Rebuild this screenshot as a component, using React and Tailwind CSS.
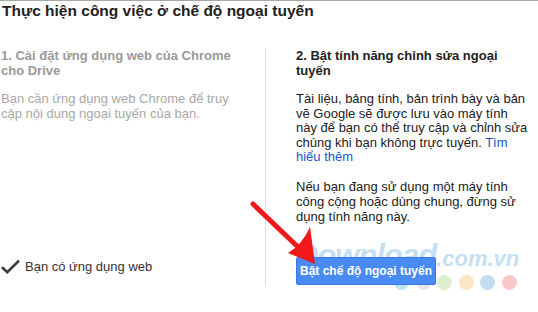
import React from "react";

const font = { fontFamily: '"Liberation Sans", Arial, sans-serif' };

function CheckIcon() {
  return (
    <svg width="19" height="15" viewBox="0 0 19 15" className="shrink-0">
      <path d="M1 8.2 L6.3 13.2 L18 1.6" fill="none" stroke="#3a3a3a" strokeWidth="2.6" />
    </svg>
  );
}

// red annotation arrow drawn over the page
function RedArrow() {
  return (
    <svg
      width="538"
      height="312"
      viewBox="0 0 538 312"
      className="absolute left-0 top-0 pointer-events-none z-30"
    >
      <path d="M253 203 L298 246" stroke="#f01818" strokeWidth="5" strokeLinecap="round" />
      <path d="M315 263 L310 226 Q302 244 288 252 Z" fill="#f01818" />
    </svg>
  );
}

function Watermark() {
  const dots = ["#8fd6f8", "#d8d8d8", "#c6e6ad", "#fcd79f", "#9cc6e6", "#f7a3a6"];
  return (
    <div className="absolute left-[296px] top-[238px] pointer-events-none z-[5]">
      <div className="flex items-baseline italic font-bold text-[#9fcbea] opacity-60">
        <span className="text-[31px] leading-[34px] tracking-[-1px]">Download</span>
        <span className="text-[22px] leading-[34px]">.com.vn</span>
      </div>
      <div className="flex gap-[6.5px] ml-[98px] -mt-[1px] opacity-60">
        {dots.map((c) => (
          <span key={c} className="block w-[15px] h-[15px] rounded-full" style={{ background: c }} />
        ))}
      </div>
    </div>
  );
}

export default function App() {
  return (
    <div className="relative w-[538px] h-[312px] bg-white overflow-hidden border-t border-[#a8a8a8]" style={font}>
      <h1 className="pl-[2px] text-[15.5px] leading-[20px] font-bold text-[#222]">
        Thực hiện công việc ở chế độ ngoại tuyến
      </h1>

      <div className="flex mt-[27px] h-[237px]">
        {/* left column */}
        <div className="w-[265px] pl-[1px] pr-[20px] flex flex-col">
          <p className="text-[13px] leading-[15px] font-bold text-[#9a9a9a]">
            1. Cài đặt ứng dụng web của Chrome cho Drive
          </p>
          <p className="mt-[14px] text-[13px] leading-[14.5px] text-[#a8a8a8]">
            Bạn cần ứng dụng web Chrome để truy cập nội dung ngoại tuyến của bạn.
          </p>
          <div className="mt-auto mb-[9px] flex items-center gap-[5px] text-[13px] text-[#333]">
            <CheckIcon />
            <span>Bạn có ứng dụng web</span>
          </div>
        </div>

        <div className="w-px bg-[#dcdcdc]" />

        {/* right column */}
        <div className="flex-1 pl-[30px] pr-[10px] flex flex-col">
          <p className="pr-[30px] text-[13px] leading-[15px] font-bold text-[#222]">
            2. Bật tính năng chỉnh sửa ngoại tuyến
          </p>
          <p className="mt-[14px] text-[13px] leading-[14.5px] text-[#222]">
            Tài liệu, bảng tính, bản trình bày và bản vẽ Google sẽ được lưu vào máy tính này để bạn có thể truy
            cập và chỉnh sửa chúng khi bạn không trực tuyến. <a className="text-[#1a56cc]">Tìm hiểu thêm</a>
          </p>
          <p className="mt-[14.5px] text-[13px] leading-[15px] text-[#222]">
            Nếu bạn đang sử dụng một máy tính công cộng hoặc dùng chung, đừng sử dụng tính năng này.
          </p>
          <button className="relative z-10 mt-auto w-[140px] h-[28px] rounded-[2px] bg-[#4a8af4] border border-[#3b78e7] text-white text-[12px] font-bold">
            Bật chế độ ngoại tuyến
          </button>
        </div>
      </div>

      <Watermark />
      <RedArrow />
    </div>
  );
}
